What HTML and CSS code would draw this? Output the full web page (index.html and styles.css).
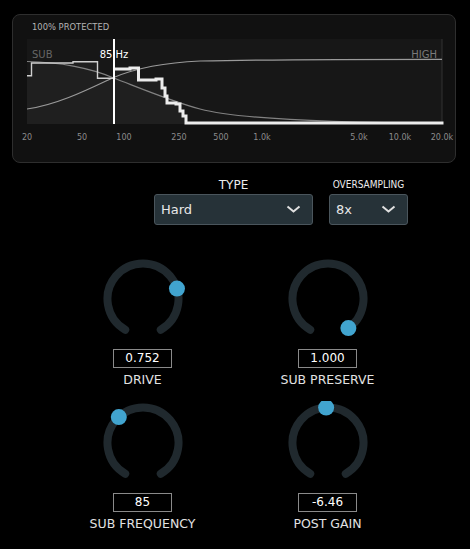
FILE: index.html
```html
<!DOCTYPE html>
<html>
<head>
    <title>Sub Protector</title>
    <link rel="stylesheet" href="styles.css">
</head>
<body>
    <div class="analyzer">
        <div class="analyzer-status">100% PROTECTED</div>
        <svg class="spectrum" width="442" height="108" viewBox="13 39 442 108">
            <rect x="27" y="39" width="415" height="85" fill="#171717"/>
            <!-- area under the protected trace -->
            <path d="M27,75.7 H31.5 V63 H73 V61.7 H97.5 V78.3 H114 V69 H130 V68 H138.5 V80 H156 V79 H162 V88 H165 V96 H167 V103 H176 V104 H180 V111 H183 V116 H186 V123 H442 V124 H27 Z" fill="#1f1f1f"/>
            <line x1="442" y1="39" x2="442" y2="124" stroke="#333" stroke-width="1"/>

            <text class="band-label" x="32" y="58">SUB</text>
            <text class="band-label band-high" x="437" y="58" text-anchor="end">HIGH</text>
            <text class="freq-marker" x="114" y="58" text-anchor="middle">85 Hz</text>

            <!-- crossover curves -->
            <path d="M27,61.5 C60,62 92,68.5 113,77.7 C140,88 172,101.5 200,109 C228,116.5 290,122.5 442,123.5" class="curve"/>
            <path d="M27,109 C58,105 92,87.5 113,77.7 C135,68.5 165,62.5 200,61 C260,59.7 350,59.3 442,59.3" class="curve curve-high"/>

            <!-- gain trace -->
            <path d="M27,75.7 H31.5 V63 H73 V61.7 H97.5 V78.3 H114" class="trace-thin"/>
            <path d="M115,69 H130 V68 H138.5 V80 H156 V79 H162 V88 H165 V96 H167 V103 H176 V104 H180 V111 H183 V116 H186 V123 H442" class="trace"/>

            <line x1="114" y1="39" x2="114" y2="124" stroke="#fff" stroke-width="2"/>

            <g class="freq-axis" text-anchor="middle">
                <text x="27" y="140">20</text>
                <text x="82" y="140">50</text>
                <text x="124" y="140">100</text>
                <text x="179" y="140">250</text>
                <text x="221" y="140">500</text>
                <text x="262" y="140">1.0k</text>
                <text x="359" y="140">5.0k</text>
                <text x="400" y="140">10.0k</text>
                <text x="442" y="140">20.0k</text>
            </g>
        </svg>
    </div>

    <div class="selectors">
        <div class="selector selector-type">
            <div class="selector-label">TYPE</div>
            <div class="dropdown">
                <span>Hard</span>
                <svg class="chevron" width="15" height="8" viewBox="0 0 15 8"><polyline points="1.5,1.5 7.5,6.5 13.5,1.5"/></svg>
            </div>
        </div>
        <div class="selector selector-os">
            <div class="selector-label selector-label-narrow">OVERSAMPLING</div>
            <div class="dropdown">
                <span>8x</span>
                <svg class="chevron" width="15" height="8" viewBox="0 0 15 8"><polyline points="1.5,1.5 7.5,6.5 13.5,1.5"/></svg>
            </div>
        </div>
    </div>

    <div class="knobs">
        <div class="knob">
            <svg class="knob-dial" width="84" height="84" viewBox="-42 -42 84 84">
                <path d="M-17.75,30.74 A35.5,35.5 0 1 1 17.75,30.74" class="knob-track"/>
                <circle cx="33.95" cy="-10.38" r="8" class="knob-dot"/>
            </svg>
            <div class="knob-value">0.752</div>
            <div class="knob-label">DRIVE</div>
        </div>
        <div class="knob">
            <svg class="knob-dial" width="84" height="84" viewBox="-42 -42 84 84">
                <path d="M-17.75,30.74 A35.5,35.5 0 1 1 17.75,30.74" class="knob-track"/>
                <circle cx="20.36" cy="29.08" r="8" class="knob-dot"/>
            </svg>
            <div class="knob-value">1.000</div>
            <div class="knob-label">SUB PRESERVE</div>
        </div>
        <div class="knob">
            <svg class="knob-dial" width="84" height="84" viewBox="-42 -42 84 84">
                <path d="M-17.75,30.74 A35.5,35.5 0 1 1 17.75,30.74" class="knob-track"/>
                <circle cx="-24.2" cy="-25.96" r="8" class="knob-dot"/>
            </svg>
            <div class="knob-value">85</div>
            <div class="knob-label">SUB FREQUENCY</div>
        </div>
        <div class="knob">
            <svg class="knob-dial" width="84" height="84" viewBox="-42 -42 84 84">
                <path d="M-17.75,30.74 A35.5,35.5 0 1 1 17.75,30.74" class="knob-track"/>
                <circle cx="-1.86" cy="-35.45" r="8" class="knob-dot"/>
            </svg>
            <div class="knob-value">-6.46</div>
            <div class="knob-label">POST GAIN</div>
        </div>
    </div>
</body>
</html>
```

FILE: styles.css
```css
body {
    font-family: 'DejaVu Sans', Verdana, sans-serif;
    margin: 0;
    padding: 14px 0 0 0;
    background: #000;
    color: #e6e6e6;
}
.analyzer {
    box-sizing: border-box;
    width: 444px;
    height: 149px;
    margin-left: 12px;
    background: #111;
    border: 1px solid #2e2e2e;
    border-radius: 8px;
}
.analyzer-status {
    box-sizing: border-box;
    height: 24px;
    padding: 7px 0 0 19px;
    font-size: 8.4px;
    line-height: 11px;
    color: #b4b4b4;
}
.spectrum {
    display: block;
}
.band-label {
    font-size: 10px;
    fill: #666;
}
.band-high {
    fill: #7a7a7a;
}
.freq-marker {
    font-size: 10px;
    fill: #fff;
}
.curve {
    fill: none;
    stroke: #828282;
    stroke-width: 1.2;
}
.curve-high {
    stroke: #9a9a9a;
}
.trace-thin {
    fill: none;
    stroke: #cfcfcf;
    stroke-width: 1.4;
}
.trace {
    fill: none;
    stroke: #ececec;
    stroke-width: 3;
    stroke-linecap: square;
}
.freq-axis {
    font-size: 8px;
    fill: #8c8c8c;
}
.selectors {
    display: flex;
    gap: 16px;
    margin: 14.6px 0 0 154px;
}
.selector-type {
    width: 159px;
}
.selector-os {
    width: 79px;
}
.selector-label {
    text-align: center;
    font-size: 12px;
    line-height: 14px;
    margin-bottom: 2.4px;
    color: #ececec;
}
.selector-label-narrow {
    font-family: 'DejaVu Sans Condensed', 'DejaVu Sans', sans-serif;
    font-stretch: condensed;
    font-size: 10px;
}
.dropdown {
    box-sizing: border-box;
    height: 31px;
    display: flex;
    align-items: center;
    justify-content: space-between;
    padding: 0 11px 0 6px;
    background: #263238;
    border: 1px solid #4a555c;
    border-radius: 3px;
    font-size: 13px;
    color: #e8e8e8;
}
.chevron polyline {
    fill: none;
    stroke: #e0e0e0;
    stroke-width: 2;
}
.knobs {
    display: grid;
    grid-template-columns: 185px 185px;
    row-gap: 14px;
    width: 370px;
    margin: 32px auto 0 auto;
}
.knob {
    display: flex;
    flex-direction: column;
    align-items: center;
}
.knob-dial {
    display: block;
}
.knob-track {
    fill: none;
    stroke: #20292e;
    stroke-width: 8;
    stroke-linecap: round;
}
.knob-dot {
    fill: #41a4cf;
}
.knob-value {
    box-sizing: border-box;
    width: 59px;
    height: 19px;
    margin-top: 8px;
    border: 1px solid #8a8a8a;
    font-size: 12px;
    line-height: 17px;
    text-align: center;
    color: #fff;
}
.knob-label {
    margin-top: 5px;
    font-size: 12.5px;
    line-height: 14px;
    color: #e2e2e2;
}
```
